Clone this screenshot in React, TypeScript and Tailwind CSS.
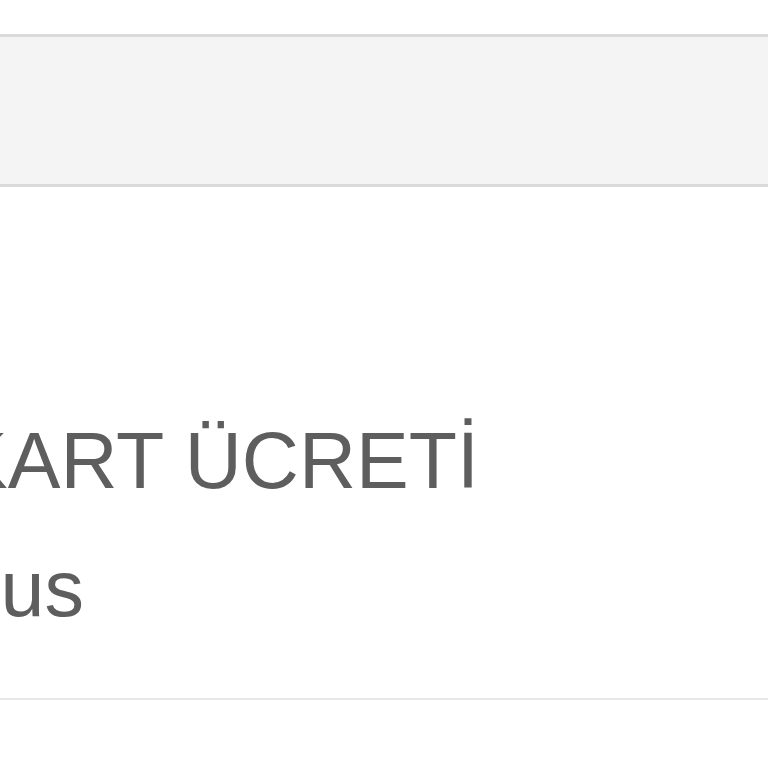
export default function App() {
  return (
    <div
      className="min-h-[768px] w-[768px] overflow-hidden bg-white"
      style={{ fontFamily: '"Liberation Sans", Arial, sans-serif' }}
    >
      <div className="h-[34px]" />
      <div className="h-[153px] border-y-[3px] border-[#dadada] bg-[#f4f4f4]" />
      <div className="border-b-2 border-[#e8e8e8] pt-[234px] pb-[70px]">
        <div className="ml-[-45px] whitespace-nowrap text-[79px] leading-none text-[#5e5e5e]">
          KART ÜCRETİ
        </div>
        <div className="ml-[-140px] mt-[49px] whitespace-nowrap text-[79px] leading-none text-[#5e5e5e]">
          Bonus
        </div>
      </div>
    </div>
  );
}
